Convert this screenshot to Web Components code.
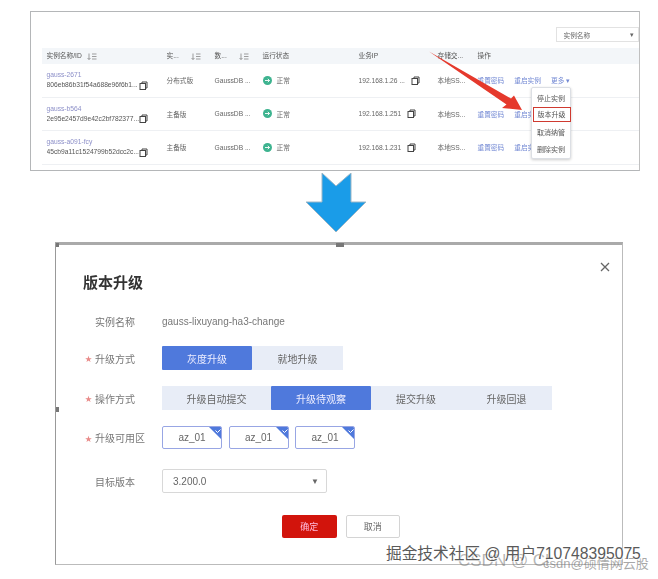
<!DOCTYPE html>
<html lang="zh"><head><meta charset="utf-8"><style>
html,body{margin:0;padding:0;background:#fff}
body{width:658px;height:579px;overflow:hidden;position:relative;font-family:"Liberation Sans","Noto Sans CJK SC",sans-serif;color:#555}
</style></head><body>
<instance-panel></instance-panel>
<flow-arrow></flow-arrow>
<upgrade-dialog></upgrade-dialog>
<water-mark></water-mark>
<script>
const FONT='"Liberation Sans","Noto Sans CJK SC",sans-serif';
const COPY='<svg width="9" height="9" viewBox="0 0 9 9" fill="none" stroke="#444" stroke-width="1"><rect x="1" y="2.500" width="5.500" height="6"/><path d="M3 2.500V1h5v6H6.500"/></svg>';
const SORT='<svg width="10" height="7" viewBox="0 0 10 7" fill="none" stroke="#777" stroke-width=".7"><path d="M2 .5v6M.5 5L2 6.500 3.500 5M5 1h4.500M5 3.500h4.500M5 6h4.500"/></svg>';
function def(name,css,html){customElements.define(name,class extends HTMLElement{constructor(){super();const r=this.attachShadow({mode:'open'});r.innerHTML='<style>'+css+'</style>'+(typeof html==='function'?html(this):html);}});}

def('copy-icon',':host{display:inline-flex;flex:none}',COPY);

def('instance-row',`
:host{display:grid;grid-template-columns:120px 48px 48px 96px 79px 40px 1fr;height:33.500px;align-items:center;border-bottom:1px solid #eef0f3;box-sizing:border-box;font-size:6.700px;color:#666;padding-left:5px}
.id{display:flex;flex-direction:column;gap:2px;line-height:8px}
.n{color:#8c8fc8;height:8px}.h{color:#555;display:flex;align-items:center;height:8px}
.h span{width:92px;overflow:hidden;white-space:nowrap}
.st{display:flex;align-items:center;gap:5px}
svg{display:block}
.ip{display:flex;align-items:center;gap:var(--ipgap,6px)}
.ops{display:flex;gap:10px;color:#7389d4;white-space:nowrap}
`,el=>`<div class="id"><div class="n">${el.getAttribute('name')}</div><div class="h"><span>${el.getAttribute('hash')}</span><copy-icon></copy-icon></div></div>
<div>${el.getAttribute('type')}</div><div>GaussDB ...</div>
<div class="st"><svg width="9" height="9" viewBox="0 0 9 9"><circle cx="4.500" cy="4.500" r="4.500" fill="#3db38f"/><path d="M2 4.500h4.500M4.800 2.800l1.700 1.700-1.700 1.700" stroke="#fff" stroke-width=".9" fill="none"/></svg>正常</div>
<div class="ip"><span>${el.getAttribute('ip')}</span><copy-icon></copy-icon></div>
<div>本地SS...</div><div class="ops"><span>重置密码</span><span>重启实例</span>${el.hasAttribute('more')?'<span>更多 ▾</span>':''}</div>`);

def('instance-panel',`
:host{display:block;box-sizing:border-box;width:610px;height:160px;margin:11px 0 0 30px;border:1.500px solid #b4b6b8;border-right-color:#c0c0c0;position:relative;background:#fff;font-size:6.700px}
.wrap{filter:blur(.45px);padding:15px 0 0 10.500px}
.bar{display:flex;justify-content:flex-end;height:21px}
.sel{width:83px;height:15px;box-sizing:border-box;border:1px solid #e2e2e2;display:flex;align-items:center;justify-content:space-between;padding:0 4px 0 6.500px;color:#666;font-size:6.700px}
.head{display:grid;grid-template-columns:120px 48px 48px 96px 79px 40px 1fr;background:#f3f6f9;height:16px;line-height:14px;align-items:center;padding-left:5px;color:#555}
.head span{display:flex;align-items:center;white-space:nowrap}
.s{margin-left:5px;display:flex}
.s2{margin-left:12px;display:flex}
.arrow{position:absolute;left:0;top:0;overflow:visible}
.menu{position:absolute;left:500px;top:75px;width:40px;height:72px;background:#fff;border:1px solid #dcdfe4;box-shadow:0 1px 3px rgba(0,0,0,.2);box-sizing:border-box;border-radius:2px;display:flex;flex-direction:column;padding-top:2px;font-size:7px;color:#555;align-items:center;filter:blur(.35px)}
.menu div{height:17px;line-height:17px;width:100%;text-align:center;box-sizing:border-box}
.menu .on{border:1px solid #cf3a30;height:15px;line-height:13px;margin:0 0 2px 1px;}
`,`<div class="wrap"><div class="bar"><div class="sel"><span>实例名称</span><span>▾</span></div></div>
<div class="head"><span>实例名称/ID<b class="s">${SORT}</b></span><span>实...<b class="s2">${SORT}</b></span><span>数...<b class="s2">${SORT}</b></span><span>运行状态</span><span>业务IP</span><span>存储交...</span><span>操作</span></div>
<instance-row more name="gauss-2671" hash="806eb86b31f54a688e96f6b1..." type="分布式版" ip="192.168.1.26 ..."></instance-row>
<instance-row name="gauss-b564" hash="2e95e2457d9e42c2bf782377..." type="主备版" ip="192.168.1.251"></instance-row>
<instance-row name="gauss-a091-fcy" hash="45cb9a11c1524799b52dcc2c..." type="主备版" ip="192.168.1.231"></instance-row></div>
<div class="menu"><div>停止实例</div><div class="on">版本升级</div><div>取消纳管</div><div>删除实例</div></div>
<svg class="arrow" width="610" height="160"><polygon points="398,39.500 480,86.500 483,83.500 491,98 471,96 475.500,92.500" fill="#e5392c"/></svg>`);

def('flow-arrow',`
:host{display:block;width:60px;height:60px;margin:2px 0 0 305.500px}
svg{display:block}
`,`<svg width="60" height="60" viewBox="0 0 60 60"><polygon points="16,0 30,13 45,0 45,29 60,29 30,59 0,29 16,29" fill="#1a9ce8" stroke="#9cb6c6" stroke-width="1"/></svg>`);

def('form-row',`
:host{display:flex;align-items:center;font-size:10px;color:#777}
.l{width:79px;padding-left:12px;box-sizing:border-box;position:relative;flex:none;white-space:nowrap}
.req::before{content:"★";color:#e98a88;position:absolute;left:2px;top:50%;transform:translateY(-50%);font-size:7px}
`,el=>`<div class="l ${el.hasAttribute('req')?'req':''}">${el.getAttribute('label')}</div><slot></slot>`);

def('seg-group',`
:host{display:flex;height:24px;font-size:10px;color:#666}
::slotted(*){display:flex;align-items:center;justify-content:center;background:#e8edf7}
::slotted(.on){background:#4f79dc;color:#eef;border-radius:1px}
`,'<slot></slot>');

def('az-chip',`
:host{display:flex;align-items:center;justify-content:center;width:60px;height:23px;box-sizing:border-box;border:1px solid #98a6e4;border-radius:2px;position:relative;font-size:10px;color:#666;overflow:hidden}
svg{position:absolute;right:-1px;top:-1px}
`,`az_01<svg width="14" height="14" viewBox="0 0 14 14"><polygon points="0,0 14,0 14,14" fill="#4f79dc"/><path d="M7.500 4.500l2 2 3-3" stroke="#fff" fill="none" stroke-width="1"/></svg>`);

def('upgrade-dialog',`
:host{display:block;box-sizing:border-box;width:568px;height:323px;margin:9px 0 0 55px;border:1.500px solid #bbb;border-top:3px solid #aaa;border-left-color:#999;position:relative;background:#fff}
.in{filter:blur(.4px);padding:27px 0 0 27px;display:flex;flex-direction:column}
h1{margin:0;font-size:15px;line-height:22px;font-weight:700;color:#333}
.v{color:#777}
.name{margin-top:18px;height:18px}
.m{margin-top:16px}
.chips{display:flex;gap:6.500px}
.sel{width:165px;height:24px;box-sizing:border-box;border:1px solid #d8d8d8;border-radius:2px;display:flex;align-items:center;justify-content:space-between;padding:0 7px 0 10px;color:#666;font-size:10px}
.acts{display:flex;gap:9px;margin:22px 0 0 199px}
.b{width:54.500px;height:23px;display:flex;align-items:center;justify-content:center;font-size:9px;box-sizing:border-box;border-radius:2px}
.p{background:#d2140c;color:#fbd}.c{border:1px solid #d4d4d4;color:#666}
.x{position:absolute;left:544px;top:17px}
.hd{position:absolute;background:#777}
`,`<div class="in"><h1>版本升级</h1>
<form-row class="name" label="实例名称"><span class="v">gauss-lixuyang-ha3-change</span></form-row>
<form-row class="m" req label="升级方式"><seg-group><span class="on" style="width:90px">灰度升级</span><span style="width:91px">就地升级</span></seg-group></form-row>
<form-row style="margin-top:16px" req label="操作方式"><seg-group><span style="width:109px">升级自动提交</span><span class="on" style="width:100px">升级待观察</span><span style="width:90px">提交升级</span><span style="width:91px">升级回退</span></seg-group></form-row>
<form-row style="margin-top:16px" req label="升级可用区"><div class="chips"><az-chip></az-chip><az-chip></az-chip><az-chip></az-chip></div></form-row>
<form-row style="margin-top:20px" label="目标版本"><div class="sel"><span>3.200.0</span><span style="font-size:8px">▼</span></div></form-row>
<div class="acts"><div class="b p">确定</div><div class="b c">取消</div></div></div>
<svg class="x" width="10" height="10" viewBox="0 0 10 10"><path d="M1 1l8 8M9 1l-8 8" stroke="#666" stroke-width="1.300"/></svg>
<i class="hd" style="left:0;top:-2px;width:3px;height:4px"></i><i class="hd" style="left:280px;top:-2px;width:8px;height:4px"></i><i class="hd" style="left:0;top:162px;width:3px;height:5px"></i>`);

def('water-mark',`
:host{position:absolute;left:0;top:0;width:658px;height:579px;pointer-events:none;font-family:${FONT}}
.a,.b,.c{position:absolute;white-space:nowrap}
.a{left:386px;top:544px;font-size:15.700px;line-height:19px;color:#5a5a5a;text-shadow:0 0 1px #fff,1px 1px 0 rgba(255,255,255,.8)}
.b{left:458px;top:551px;font-size:17px;line-height:20px;color:rgba(120,120,120,.55)}
.c{left:543px;top:557px;font-size:13px;line-height:14px;color:rgba(110,110,110,.6)}
`,`<div class="b">CSDN @ Cl</div><div class="c">csdn@硕情网云股</div><div class="a">掘金技术社区 @ 用户710748395075</div>`);
</script></body></html>
